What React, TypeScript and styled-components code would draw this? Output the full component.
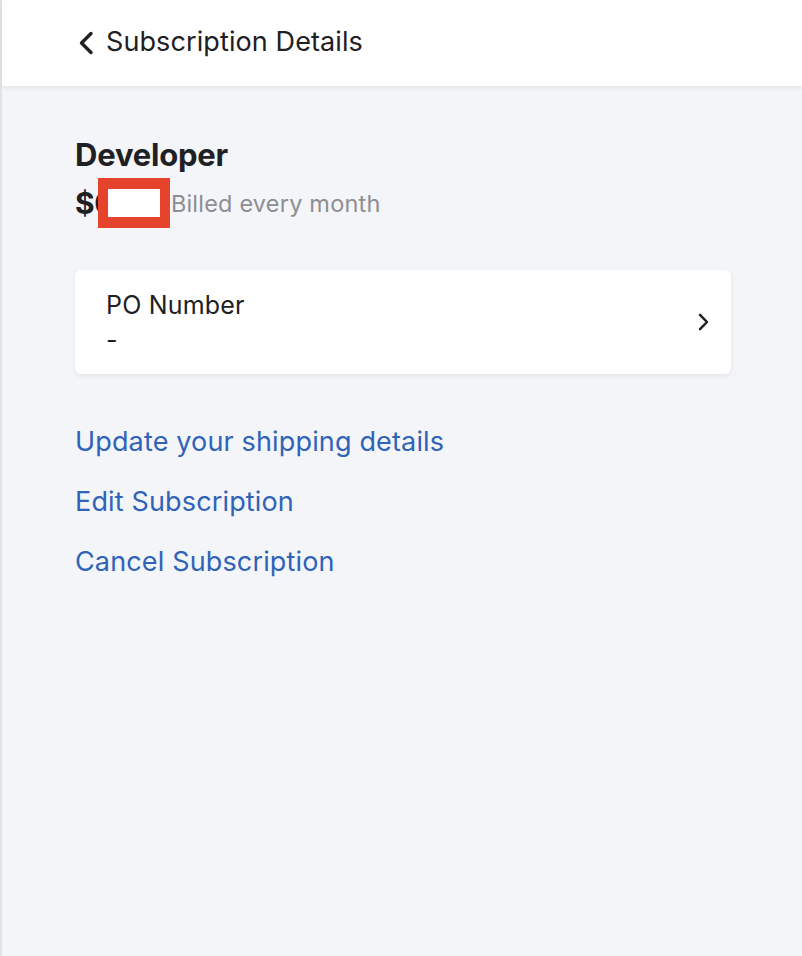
import React from "react";
import styled, { createGlobalStyle } from "styled-components";

const GlobalStyle = createGlobalStyle`
  html, body {
    margin: 0;
    padding: 0;
    background: #f4f5f9;
    font-family: Inter, "Noto Sans", sans-serif;
  }
`;

const Page = styled.div`
  min-height: 956px;
  background: #f4f5f9;
  border-left: 2px solid #e2e3e7;
  box-sizing: border-box;
`;

const Header = styled.header`
  height: 86px;
  background: #ffffff;
  display: flex;
  align-items: center;
  padding-left: 76px;
  box-shadow: 0 2px 4px rgba(0, 0, 0, 0.07);
  gap: 12px;
`;

const Title = styled.h1`
  margin: 0;
  margin-top: -4px;
  font-size: 27px;
  font-weight: 400;
  color: #1f2024;
  letter-spacing: 0.1px;
`;

const Content = styled.main`
  padding: 52px 72px 0 73px;
`;

const PlanName = styled.h2`
  margin: 0;
  font-size: 31px;
  font-weight: 700;
  color: #1f2024;
  line-height: 34px;
  letter-spacing: -0.2px;
`;

const PriceRow = styled.div`
  display: flex;
  align-items: center;
  margin-top: 6px;
  height: 50px;
`;

const Price = styled.span`
  font-size: 30px;
  font-weight: 700;
  color: #1f2024;
  letter-spacing: -0.5px;
`;

// red box pasted over the amount in the screenshot
const Redaction = styled.span`
  position: relative;
  box-sizing: border-box;
  display: inline-block;
  width: 72px;
  height: 50px;
  background: #ffffff;
  border: 10px solid #e5432b;
  border-width: 11px 10px;
  margin-left: -16px;
`;

const Billing = styled.span`
  font-size: 23.5px;
  color: #8d8e93;
  margin-left: 1px;
  letter-spacing: 0.2px;
`;

const Card = styled.button`
  all: unset;
  box-sizing: border-box;
  margin-top: 42px;
  width: 656px;
  height: 104px;
  background: #ffffff;
  border-radius: 6px;
  box-shadow: 0 2px 5px rgba(0, 0, 0, 0.07);
  display: flex;
  align-items: center;
  justify-content: space-between;
  padding: 0 22px 0 31px;
`;

const CardText = styled.div`
  display: flex;
  flex-direction: column;
  gap: 5px;
`;

const CardLabel = styled.span`
  font-size: 25px;
  line-height: 30px;
  color: #1f2024;
  letter-spacing: 0.2px;
`;

const CardValue = styled.span`
  font-size: 25px;
  line-height: 30px;
  color: #1f2024;
`;

const Links = styled.nav`
  display: flex;
  flex-direction: column;
  gap: 28px;
  margin-top: 52px;
`;

const Link = styled.a`
  font-size: 27px;
  line-height: 32px;
  color: #2f63b8;
  text-decoration: none;
  letter-spacing: 0.15px;
`;

const BackIcon = () => (
  <svg width="16" height="24" viewBox="0 0 16 24" fill="none">
    <path
      d="M13 2.5L3.5 12l9.5 9.5"
      stroke="#1f2024"
      strokeWidth={3.4}
      strokeLinecap="round"
      strokeLinejoin="round"
    />
  </svg>
);

const ForwardIcon = () => (
  <svg width="11" height="18" viewBox="0 0 11 18" fill="none">
    <path
      d="M2 1.8L9 9l-7 7.2"
      stroke="#1f2024"
      strokeWidth={2.5}
      strokeLinecap="round"
      strokeLinejoin="round"
    />
  </svg>
);

export default function App() {
  return (
    <>
      <GlobalStyle />
      <Page>
        <Header>
          <BackIcon />
          <Title>Subscription Details</Title>
        </Header>
        <Content>
          <PlanName>Developer</PlanName>
          <PriceRow>
            <Price>$0</Price>
            <Redaction />
            <Billing>Billed every month</Billing>
          </PriceRow>
          <Card>
            <CardText>
              <CardLabel>PO Number</CardLabel>
              <CardValue>-</CardValue>
            </CardText>
            <ForwardIcon />
          </Card>
          <Links>
            <Link href="#">Update your shipping details</Link>
            <Link href="#">Edit Subscription</Link>
            <Link href="#">Cancel Subscription</Link>
          </Links>
        </Content>
      </Page>
    </>
  );
}
